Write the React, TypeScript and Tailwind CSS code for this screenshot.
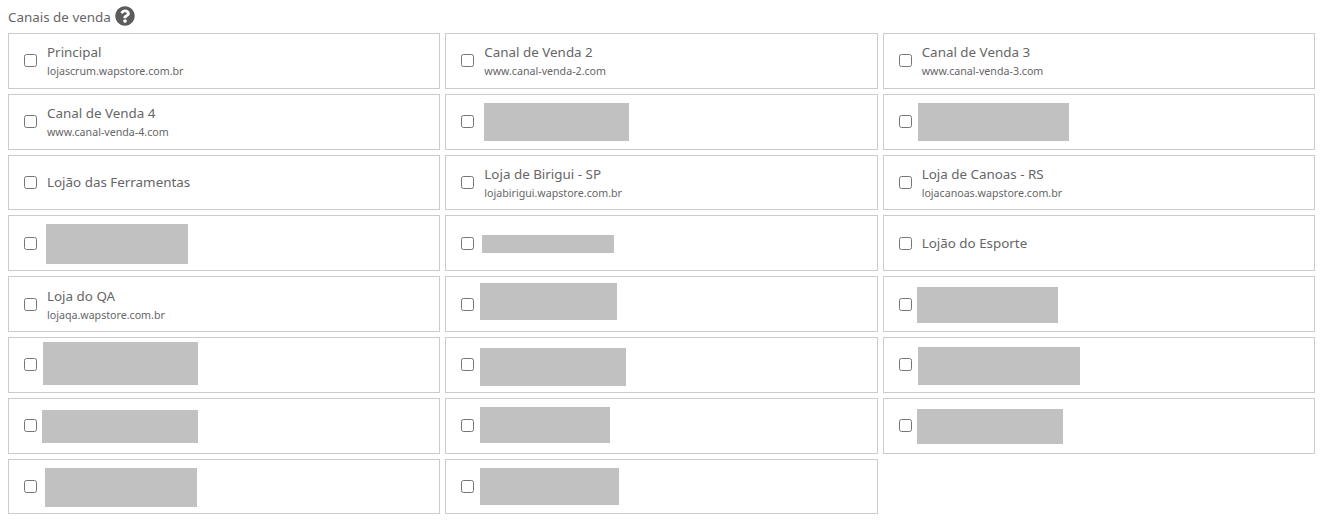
import { FaQuestionCircle } from "react-icons/fa";

type Canal = {
  nome?: string;
  url?: string;
  // redacted block: class list with margin, width and height
  bloco?: string;
};

const canais: Canal[] = [
  { nome: "Principal", url: "lojascrum.wapstore.com.br" },
  { nome: "Canal de Venda 2", url: "www.canal-venda-2.com" },
  { nome: "Canal de Venda 3", url: "www.canal-venda-3.com" },
  { nome: "Canal de Venda 4", url: "www.canal-venda-4.com" },
  { bloco: "ml-[10px] w-[145px] h-[38px]" },
  { bloco: "ml-[6px] w-[151px] h-[38px]" },
  { nome: "Lojão das Ferramentas" },
  { nome: "Loja de Birigui - SP", url: "lojabirigui.wapstore.com.br" },
  { nome: "Loja de Canoas - RS", url: "lojacanoas.wapstore.com.br" },
  { bloco: "ml-[9px] w-[142px] h-[40px] mt-[1px]" },
  { bloco: "ml-[8px] w-[132px] h-[18px] mt-[1px]" },
  { nome: "Lojão do Esporte" },
  { nome: "Loja do QA", url: "lojaqa.wapstore.com.br" },
  { bloco: "ml-[6px] w-[137px] h-[37px] mt-[-6px]" },
  { bloco: "ml-[5px] w-[141px] h-[36px] mt-[1px]" },
  { bloco: "ml-[6px] w-[155px] h-[43px] mt-[-3px]" },
  { bloco: "ml-[6px] w-[146px] h-[38px] mt-[4px]" },
  { bloco: "ml-[6px] w-[162px] h-[38px] mt-[3px]" },
  { bloco: "ml-[5px] w-[156px] h-[33px] mt-[1px]" },
  { bloco: "ml-[6px] w-[130px] h-[36px] mt-[-1px]" },
  { bloco: "ml-[5px] w-[146px] h-[35px] mt-[2px]" },
  { bloco: "ml-[8px] w-[152px] h-[39px] mt-[3px]" },
  { bloco: "ml-[6px] w-[139px] h-[37px]" },
];

function CanalItem({ canal }: { canal: Canal }) {
  return (
    <label className="flex items-center h-[55.8px] border border-[#cccccc] bg-white pl-[15px]">
      <input type="checkbox" className="w-[13px] h-[13px] shrink-0" />
      {canal.bloco ? (
        <div className={`bg-[#c1c1c1] ${canal.bloco}`} />
      ) : (
        <div className="ml-[10px] flex flex-col">
          <span className="text-[13.4px] leading-[20px] text-[#666666]">{canal.nome}</span>
          {canal.url && (
            <span className="text-[10.65px] leading-[16px] mt-[1px] text-[#666666]">{canal.url}</span>
          )}
        </div>
      )}
    </label>
  );
}

export default function App() {
  return (
    <div className="min-h-screen bg-white px-2 pt-[6px] font-['Noto_Sans','Open_Sans',sans-serif]">
      <div className="flex items-center h-[20px] mb-[7px]">
        <span className="text-[13.4px] text-[#666666] mt-[2px]">Canais de venda</span>
        <FaQuestionCircle className="ml-[4px] text-[#5c5c5c]" size={20} />
      </div>
      <div className="grid grid-cols-3 gap-[5px]">
        {canais.map((canal, i) => (
          <CanalItem key={i} canal={canal} />
        ))}
      </div>
    </div>
  );
}
